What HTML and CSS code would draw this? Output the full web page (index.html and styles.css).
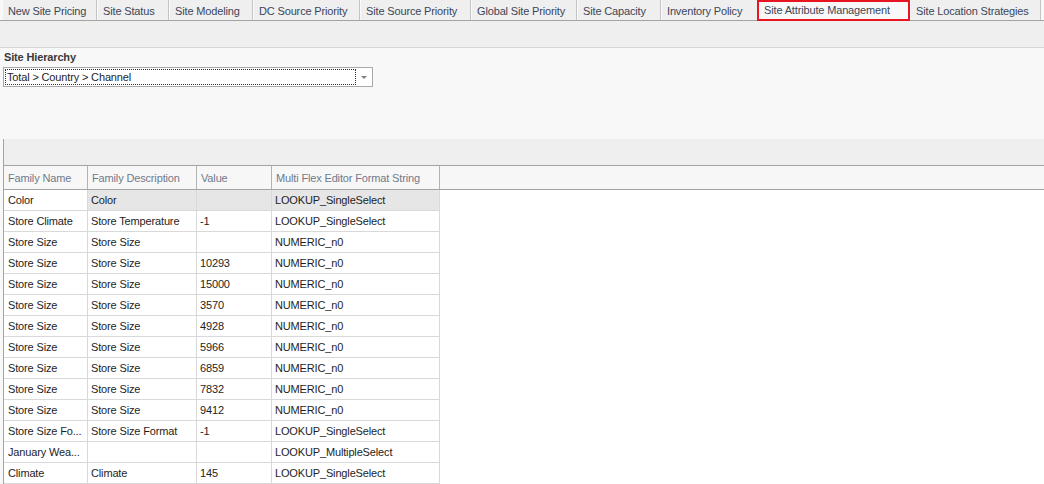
FILE: index.html
```html
<!DOCTYPE html>
<html>
<head>
<meta charset="utf-8">
<link rel="stylesheet" href="styles.css">
</head>
<body>
<div class="tabs">
  <div class="tab t1">New Site Pricing</div>
  <div class="tab t2">Site Status</div>
  <div class="tab t3">Site Modeling</div>
  <div class="tab t4">DC Source Priority</div>
  <div class="tab t5">Site Source Priority</div>
  <div class="tab t6">Global Site Priority</div>
  <div class="tab t7">Site Capacity</div>
  <div class="tab t8">Inventory Policy</div>
  <div class="tab t9 active">Site Attribute Management</div>
  <div class="tab t10">Site Location Strategies</div>
</div>
<div class="toolbar"></div>
<div class="panel">
  <div class="label">Site Hierarchy</div>
  <div class="combo">
    <div class="combo-text">Total &gt; Country &gt; Channel</div>
    <div class="combo-btn"><span class="arrow"></span></div>
  </div>
</div>
<div class="grid">
  <div class="group-band"></div>
  <div class="ghead">
    <div class="hc">Family Name</div>
    <div class="hc">Family Description</div>
    <div class="hc">Value</div>
    <div class="hc">Multi Flex Editor Format String</div>
    <div class="hfill"></div>
  </div>
  <div class="rows">
    <div class="row sel"><div class="c first">Color</div><div class="c">Color</div><div class="c"></div><div class="c">LOOKUP_SingleSelect</div></div>
    <div class="row"><div class="c">Store Climate</div><div class="c">Store Temperature</div><div class="c">-1</div><div class="c">LOOKUP_SingleSelect</div></div>
    <div class="row"><div class="c">Store Size</div><div class="c">Store Size</div><div class="c"></div><div class="c">NUMERIC_n0</div></div>
    <div class="row"><div class="c">Store Size</div><div class="c">Store Size</div><div class="c">10293</div><div class="c">NUMERIC_n0</div></div>
    <div class="row"><div class="c">Store Size</div><div class="c">Store Size</div><div class="c">15000</div><div class="c">NUMERIC_n0</div></div>
    <div class="row"><div class="c">Store Size</div><div class="c">Store Size</div><div class="c">3570</div><div class="c">NUMERIC_n0</div></div>
    <div class="row"><div class="c">Store Size</div><div class="c">Store Size</div><div class="c">4928</div><div class="c">NUMERIC_n0</div></div>
    <div class="row"><div class="c">Store Size</div><div class="c">Store Size</div><div class="c">5966</div><div class="c">NUMERIC_n0</div></div>
    <div class="row"><div class="c">Store Size</div><div class="c">Store Size</div><div class="c">6859</div><div class="c">NUMERIC_n0</div></div>
    <div class="row"><div class="c">Store Size</div><div class="c">Store Size</div><div class="c">7832</div><div class="c">NUMERIC_n0</div></div>
    <div class="row"><div class="c">Store Size</div><div class="c">Store Size</div><div class="c">9412</div><div class="c">NUMERIC_n0</div></div>
    <div class="row"><div class="c">Store Size Fo...</div><div class="c">Store Size Format</div><div class="c">-1</div><div class="c">LOOKUP_SingleSelect</div></div>
    <div class="row"><div class="c">January Wea...</div><div class="c"></div><div class="c"></div><div class="c">LOOKUP_MultipleSelect</div></div>
    <div class="row"><div class="c">Climate</div><div class="c">Climate</div><div class="c">145</div><div class="c">LOOKUP_SingleSelect</div></div>
  </div>
</div>
</body>
</html>
```

FILE: styles.css
```css
* { box-sizing: border-box; }
html, body { margin: 0; padding: 0; }
body {
  width: 1044px;
  height: 484px;
  overflow: hidden;
  background: #f8f8f8;
  font-family: "Liberation Sans", Arial, sans-serif;
  font-size: 11px;
  letter-spacing: -0.15px;
  color: #202020;
}

/* Tabs */
.tabs {
  display: flex;
  height: 21px;
  border-bottom: 1px solid #a3a3a3;
  background: #f8f8f8;
}
.tab {
  height: 20px;
  line-height: 22px;
  padding-left: 5px;
  background: #efefef;
  border-right: 1px solid #c4c4c4;
  border-left: 1px solid #fafafa;
  color: #3c4659;
  white-space: nowrap;
  overflow: hidden;
}
.t1 { width: 95px; margin-left: 2px; }
.t2 { width: 72px; }
.t3 { width: 84px; }
.t4 { width: 107px; }
.t5 { width: 111px; }
.t6 { width: 106px; }
.t7 { width: 84px; }
.t8 { width: 97px; }
.t9 { width: 153px; }
.t10 { width: 131px; }
.tab.active {
  height: 21px;
  background: #f8f8f8;
  border: 2px solid #e8141f;
  padding-left: 5px;
  line-height: 17px;
  margin-left: -1px;
}

/* Toolbar band */
.toolbar {
  height: 27px;
  background: #efefef;
  border-bottom: 1px solid #d6d6d6;
}

/* Filter panel */
.panel {
  padding: 2px 0 0 3px;
  height: 91px;
}
.label {
  font-weight: bold;
  color: #3a3a3a;
  line-height: 14px;
  height: 14px;
  padding-left: 1px;
  margin-bottom: 3px;
}
.combo {
  display: flex;
  width: 370px;
  height: 20px;
  background: #fff;
  border: 1px solid #a9a9a9;
  padding: 1px;
}
.combo-text {
  width: 351px;
  height: 16px;
  border: 1px dotted #333;
  line-height: 14px;
  padding-left: 1px;
  color: #1e1e1e;
}
.combo-btn {
  flex: 1;
  display: flex;
  align-items: center;
  justify-content: center;
}
.arrow {
  width: 0;
  height: 0;
  border-left: 3px solid transparent;
  border-right: 3px solid transparent;
  border-top: 3px solid #808080;
  margin-top: 1px;
}

/* Grid */
.grid {
  margin-left: 3px;
  border-left: 1px solid #a3a3a3;
  background: #fff;
  height: 345px;
}
.group-band {
  height: 27px;
  background: #efefef;
  border-bottom: 1px solid #a3a3a3;
}
.ghead {
  display: grid;
  grid-template-columns: 84px 109px 75px 168px 1fr;
  height: 24px;
  background: #f7f7f7;
  border-bottom: 1px solid #a3a3a3;
}
.hc {
  border-right: 1px solid #b4b4b4;
  padding-left: 4px;
  line-height: 24px;
  color: #6f7a8c;
  white-space: nowrap;
  overflow: hidden;
}
.rows { background: #fff; }
.row {
  display: grid;
  grid-template-columns: 84px 109px 75px 168px;
  height: 21px;
}
.c {
  border-right: 1px solid #d9d9d9;
  border-bottom: 1px solid #d9d9d9;
  padding-left: 3px;
  line-height: 20px;
  white-space: nowrap;
  overflow: hidden;
  color: #1e1e1e;
}
.row > .c:first-child { padding-left: 4px; }
.row.sel .c { background: #e6e6e6; }
.row.sel .c.first { background: #fff; }
```
